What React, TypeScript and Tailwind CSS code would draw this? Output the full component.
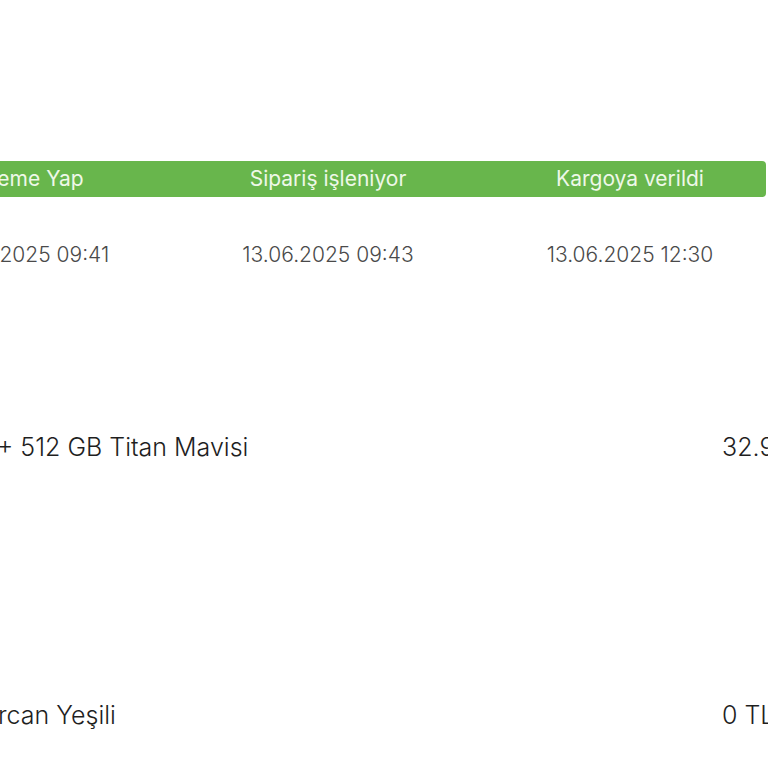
export default function App() {
  const steps = [
    { label: "Ödeme Yap", date: "13.06.2025 09:41" },
    { label: "Sipariş işleniyor", date: "13.06.2025 09:43" },
    { label: "Kargoya verildi", date: "13.06.2025 12:30" },
  ];

  return (
    <div
      className="w-[768px] h-[768px] overflow-hidden bg-white"
      style={{ fontFamily: "Inter, 'Noto Sans', sans-serif" }}
    >
      {/* Status timeline */}
      <div className="pt-[161px] ml-[-125px]">
        <div className="flex h-[36px] w-[891px] items-center rounded-r-[4px] bg-[#68b64c]">
          {steps.map((s) => (
            <div
              key={s.label}
              className="w-[302px] shrink-0 text-center text-[21px] text-[#eef8e8] whitespace-nowrap"
            >
              {s.label}
            </div>
          ))}
        </div>
        <div className="flex pt-[42px]">
          {steps.map((s) => (
            <div
              key={s.date}
              className="w-[302px] shrink-0 text-center text-[21px] font-light text-[#4a4a4a] whitespace-nowrap"
            >
              {s.date}
            </div>
          ))}
        </div>
      </div>

      {/* Items */}
      <div className="mt-[158px] flex items-center justify-between whitespace-nowrap">
        <div className="ml-[-3px] text-[25px] font-light text-[#1f1f1f]">+ 512 GB Titan Mavisi</div>
        <div className="w-[46px] text-[25px] font-light text-[#1f1f1f]">32.999 TL</div>
      </div>

      <div className="mt-[231px] flex items-center justify-between whitespace-nowrap">
        <div className="ml-[-2px] text-[25px] font-light text-[#1f1f1f]">rcan Yeşili</div>
        <div className="w-[46px] text-[25px] font-light text-[#1f1f1f]">0 TL</div>
      </div>
    </div>
  );
}
